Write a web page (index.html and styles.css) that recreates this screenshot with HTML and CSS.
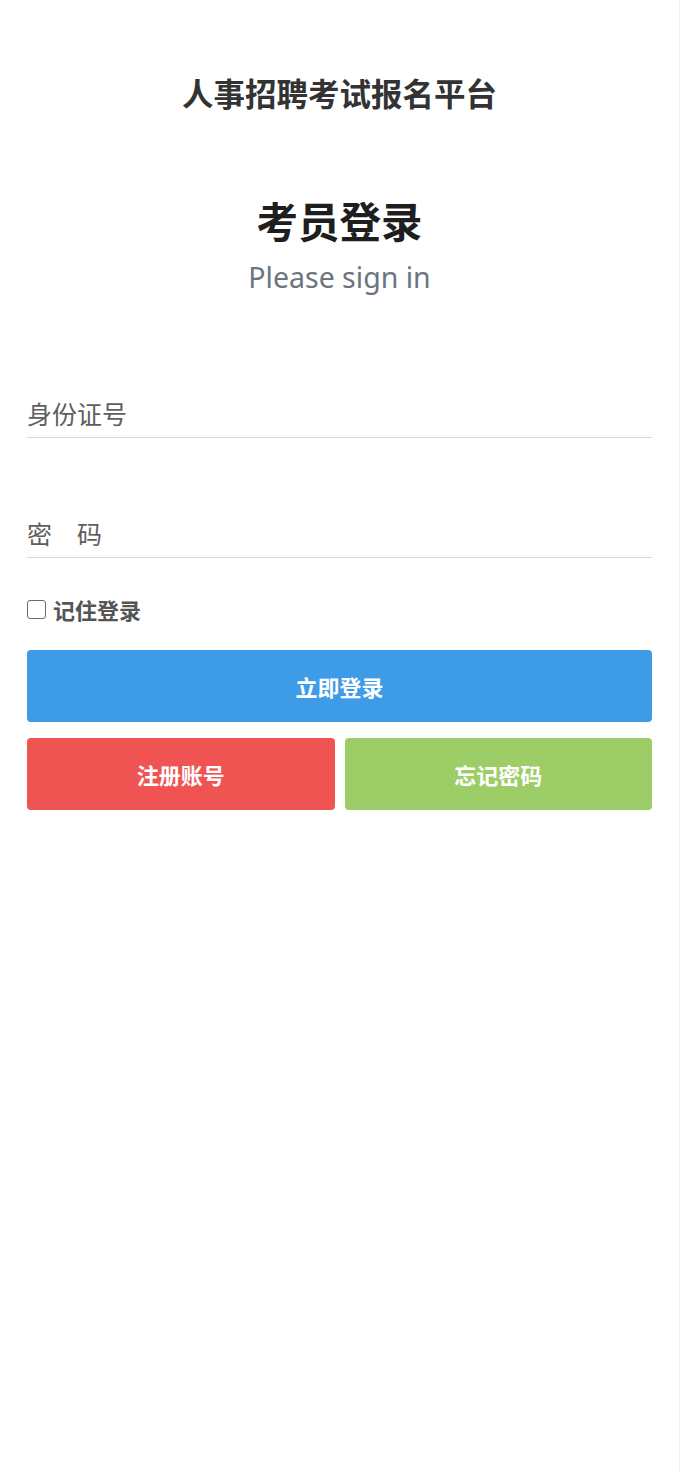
FILE: index.html
```html
<!DOCTYPE html>
<html lang="zh-CN">
<head>
<meta charset="utf-8">
<title>考员登录</title>
<link rel="stylesheet" href="styles.css">
</head>
<body>
<div class="page">
  <h1 class="site-title">人事招聘考试报名平台</h1>
  <h2 class="login-title">考员登录</h2>
  <p class="login-sub">Please sign in</p>
  <form class="login-form">
    <input class="field field-id" type="text" placeholder="身份证号">
    <input class="field field-pwd" type="password" placeholder="密　码">
    <label class="remember"><span class="box"></span><span class="remember-text">记住登录</span></label>
    <button type="button" class="btn btn-primary">立即登录</button>
    <div class="btn-row">
      <button type="button" class="btn btn-danger">注册账号</button>
      <button type="button" class="btn btn-success">忘记密码</button>
    </div>
  </form>
</div>
</body>
</html>
```

FILE: styles.css
```css
html, body {
  margin: 0;
  padding: 0;
  background: #ffffff;
}
body {
  font-family: "Noto Sans", "Noto Sans CJK SC", sans-serif;
}
.page {
  width: 680px;
  min-height: 1472px;
  border-right: 1px solid #eef0f6;
  padding: 72px 27px 0 27px;
  box-sizing: border-box;
}
.site-title {
  margin: 0;
  height: 40px;
  line-height: 40px;
  font-size: 31.5px;
  font-weight: 700;
  color: #333333;
  text-align: center;
  font-family: "Noto Sans CJK SC", sans-serif;
}
.login-title {
  margin: 83px 0 0 0;
  height: 50px;
  line-height: 50px;
  font-size: 41.5px;
  font-weight: 700;
  color: #1e1e1e;
  text-align: center;
  font-family: "Noto Sans CJK SC", sans-serif;
}
.login-sub {
  margin: 14px 0 0 0;
  height: 36px;
  line-height: 36px;
  font-size: 28.5px;
  color: #6c757d;
  text-align: center;
}
.login-form {
  display: flex;
  flex-direction: column;
  margin-top: 93px;
}
.field {
  display: block;
  width: 100%;
  height: 50px;
  box-sizing: border-box;
  border: none;
  border-bottom: 1px solid #d3d8df;
  padding: 0;
  font-size: 25px;
  font-family: "Noto Sans CJK SC", sans-serif;
  color: #555;
  background: transparent;
  outline: none;
}
.field::placeholder {
  color: #5e5e5e;
}
.field-pwd {
  margin-top: 70px;
}
.remember {
  display: flex;
  align-items: center;
  height: 30px;
  margin-top: 36px;
  gap: 7px;
}
.box {
  width: 17px;
  height: 17px;
  border: 1.5px solid #6b6b6b;
  border-radius: 3px;
  box-sizing: content-box;
}
.remember-text {
  font-size: 22px;
  font-weight: 700;
  color: #555555;
  font-family: "Noto Sans CJK SC", sans-serif;
}
.btn {
  height: 72px;
  border: none;
  border-radius: 4px;
  color: #ffffff;
  font-size: 22px;
  font-weight: 700;
  font-family: "Noto Sans CJK SC", sans-serif;
  padding: 0;
}
.btn-primary {
  margin-top: 26px;
  width: 100%;
  background: #3e9be8;
}
.btn-row {
  display: grid;
  grid-template-columns: 1fr 1fr;
  gap: 10px;
  margin-top: 16px;
}
.btn-danger {
  background: #f05452;
}
.btn-success {
  background: #9ccd66;
}
```
